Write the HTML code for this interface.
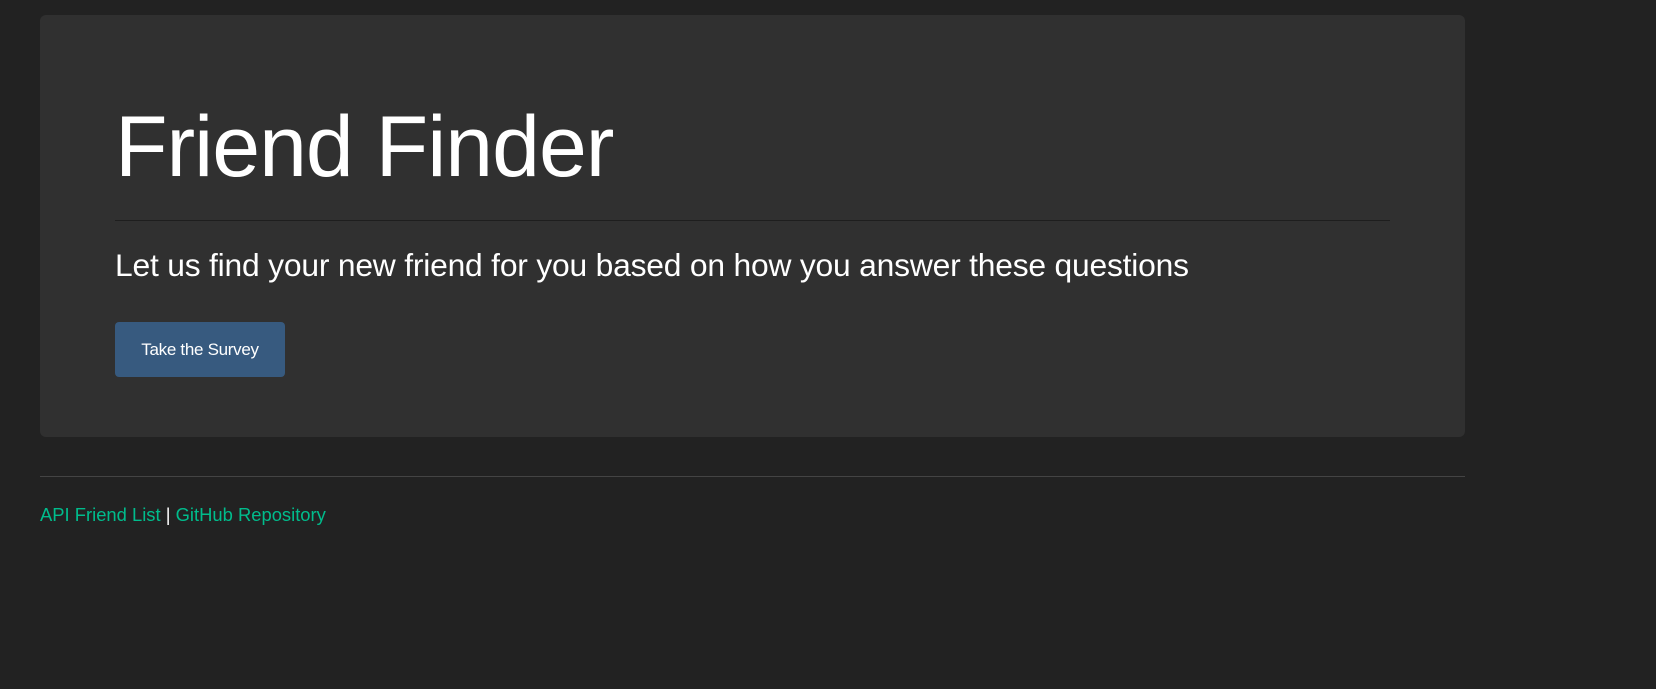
<!DOCTYPE html>
<html><head><meta charset="utf-8"><style>
html,body{margin:0;padding:0;background:#222;width:1656px;height:689px;overflow:hidden;font-family:"Liberation Sans",sans-serif;color:#fff}
.jumbo{position:absolute;left:40px;top:15px;width:1425px;height:422px;background:#303030;border-radius:6px}
h1{position:absolute;left:75px;top:82px;margin:0;font-weight:normal;font-size:86px;line-height:100px;letter-spacing:-1px;white-space:nowrap}
.hr1{position:absolute;left:75px;top:205px;width:1275px;height:1px;background:#1e1e1e}
.lead{position:absolute;left:75px;top:230px;margin:0;font-size:31.8px;line-height:40px;white-space:nowrap;letter-spacing:-0.2px}
.btn{position:absolute;left:75px;top:307px;width:170px;height:55px;background:#375a7f;border-radius:4px;font-size:17px;line-height:55px;text-align:center;letter-spacing:-0.3px}
.hr2{position:absolute;left:40px;top:476px;width:1425px;height:1px;background:#444}
.foot{position:absolute;left:40px;top:503px;font-size:18.4px;line-height:24px;white-space:nowrap}
.foot a{color:#00bc8c;text-decoration:none}
</style></head><body>
<div class="jumbo">
<h1>Friend Finder</h1>
<div class="hr1"></div>
<p class="lead">Let us find your new friend for you based on how you answer these questions</p>
<div class="btn">Take the Survey</div>
</div>
<div class="hr2"></div>
<div class="foot"><a>API Friend List</a> | <a>GitHub Repository</a></div>
</body></html>
